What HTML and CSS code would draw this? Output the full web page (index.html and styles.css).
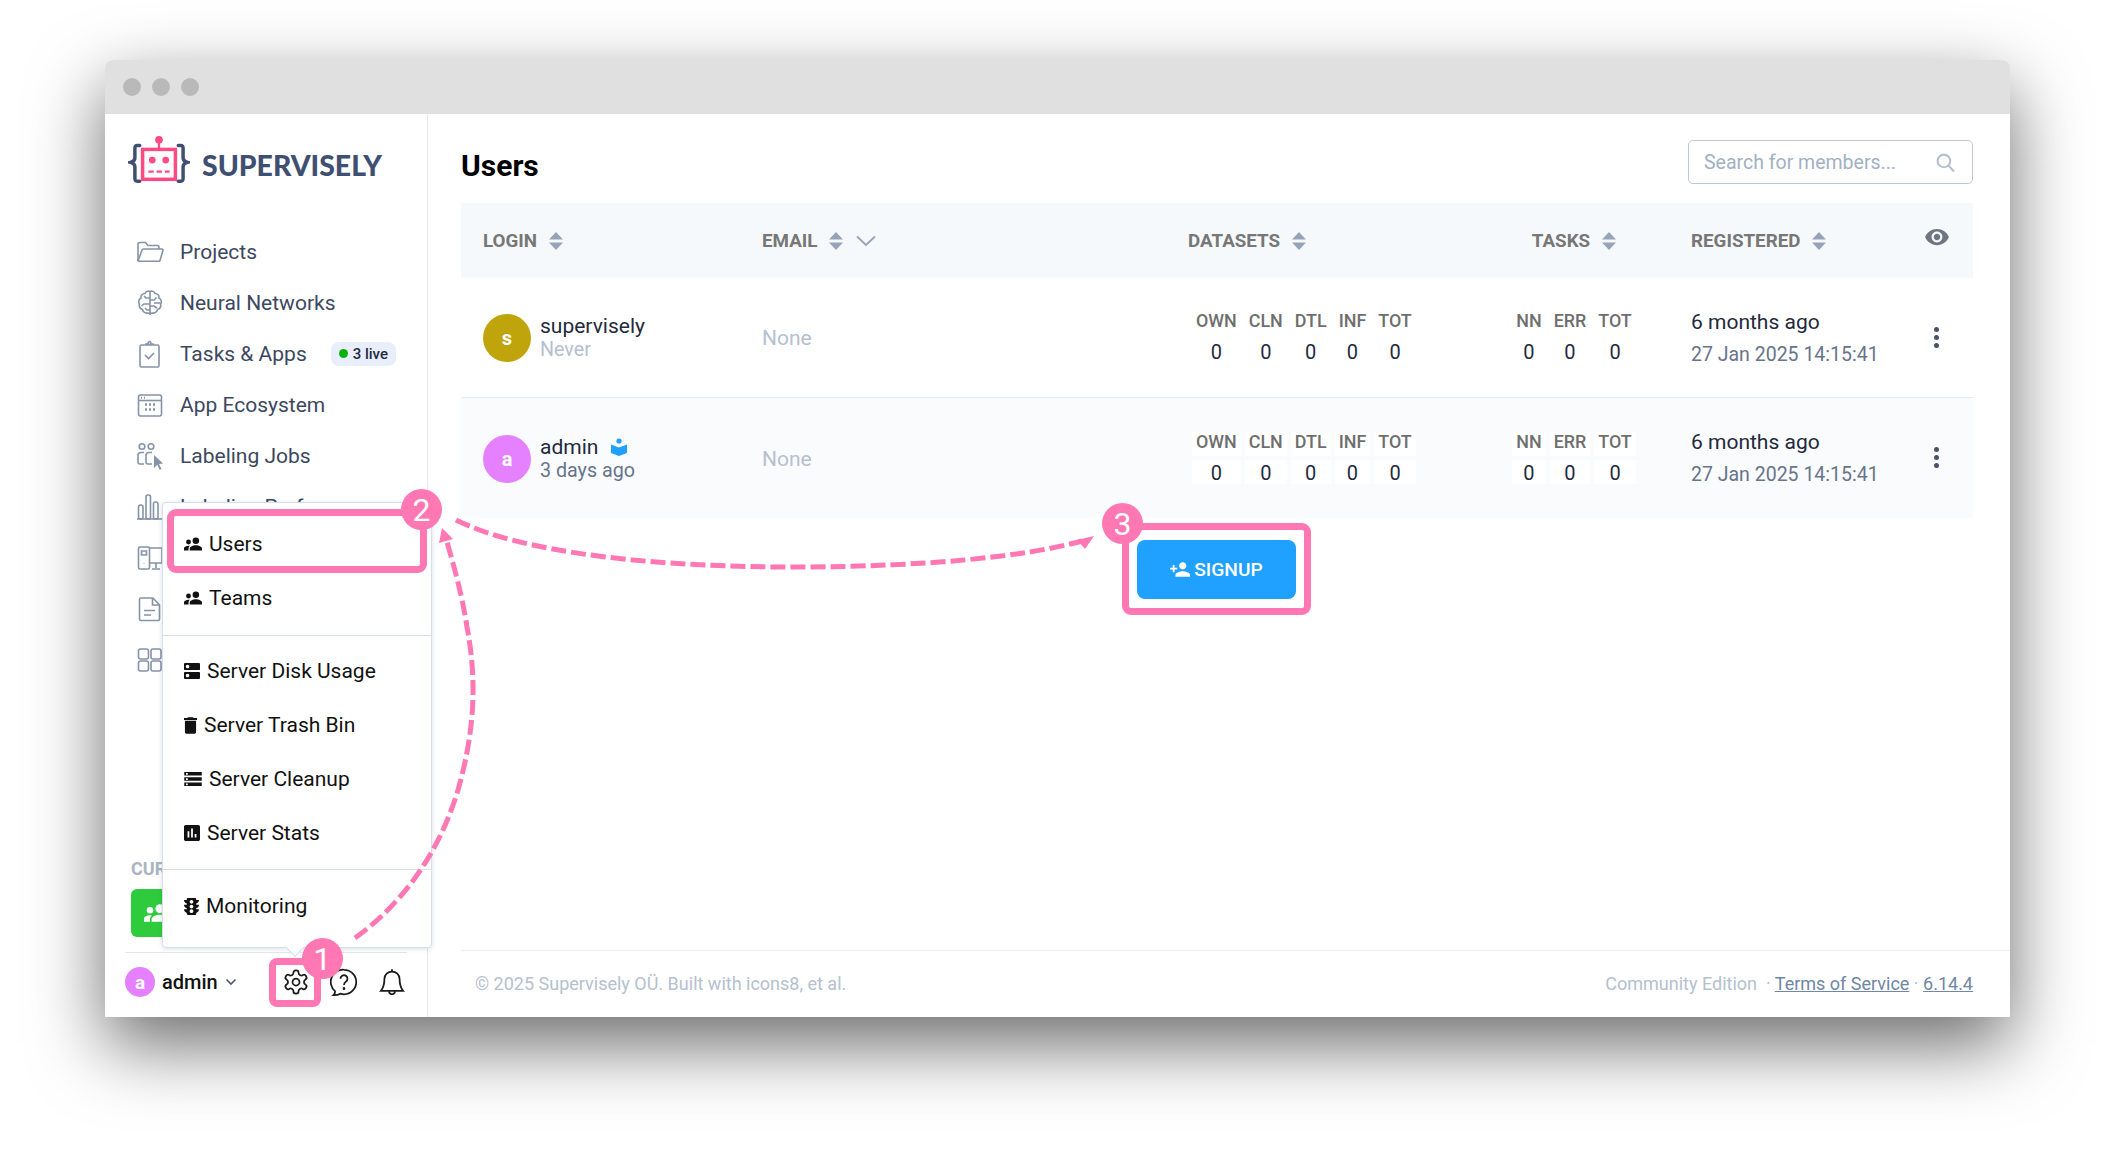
FILE: index.html
```html
<!DOCTYPE html>
<html>
<head>
  <title>Supervisely - Users</title>
  <link rel="stylesheet" href="styles.css">
</head>
<body>
  <svg class="sprite" xmlns="http://www.w3.org/2000/svg">
    <symbol id="sort" viewBox="0 0 14 18"><path d="M7 0l7 7.6H0zM7 18L0 10.4h14z"/></symbol>
    <symbol id="people" viewBox="1 4 22 16"><circle cx="15.5" cy="8" r="4"/><circle cx="6.5" cy="9.5" r="3"/><path d="M15.5 13.5c-3.5 0-7.5 1.7-7.5 4V20h15v-2.5c0-2.300-4-4-7.500-4zM6.500 14c-2.500 0-5.500 1.300-5.500 3.300V20h5.500v-2.500c0-1.200.6-2.300 1.700-3.300-.6-.1-1.200-.2-1.700-.2z"/></symbol>
  </svg>

  <div class="page">
    <div class="window">
      <div class="titlebar">
        <span class="dot"></span><span class="dot"></span><span class="dot"></span>
      </div>
      <div class="app">

        <aside class="sidebar">
          <div class="logo">
            <svg class="logo-mark" viewBox="0 0 64 56" width="62" height="54">
              <g fill="none" stroke="#3f4f72" stroke-width="3.600" stroke-linecap="round">
                <path d="M12 12H9.500C7.500 12 7 13 7 15v10c0 2-1 3.500-4.500 4.500C6 30.500 7 32 7 34v12c0 2 .5 3 2.500 3H12"/>
                <path d="M52 12h2.500c2 0 2.500 1 2.500 3v10c0 2 1 3.500 4.500 4.500C58 30.500 57 32 57 34v12c0 2-.5 3-2.500 3H52"/>
              </g>
              <circle cx="32" cy="6" r="4" fill="#fb4b82"/>
              <path d="M32 8v7" stroke="#fb4b82" stroke-width="2.400"/>
              <rect x="15" y="16" width="34" height="31" fill="none" stroke="#fb4b82" stroke-width="3.600"/>
              <circle cx="25" cy="27" r="3.500" fill="#fb4b82"/>
              <circle cx="39" cy="27" r="3.500" fill="#fb4b82"/>
              <path d="M21 39h22" stroke="#fb4b82" stroke-width="2.400" stroke-dasharray="5.500 3"/>
            </svg>
            <span class="logo-text">SUPERVISELY</span>
          </div>

          <nav class="nav">
            <a class="nav-item">
              <svg class="nav-icon" viewBox="0 0 28 28"><path d="M2 23V6a1.500 1.500 0 0 1 1.500-1.500h6l2.500 3h9.500A1.500 1.500 0 0 1 23 9v2"/><path d="M2 23l4-11a1.500 1.500 0 0 1 1.400-1H26a1 1 0 0 1 1 1.300L24 22.500a1 1 0 0 1-1 .7H3a1 1 0 0 1-1-.2z"/></svg>
              <span>Projects</span>
            </a>
            <a class="nav-item">
              <svg class="nav-icon" viewBox="0 0 28 28"><path d="M14 2.500c-2-1-4.500 0-5 2-2.500 0-4.500 2-4 4.500-2.500 1.500-3 4-1.500 6-1 2.500.5 5 3 5.500.5 2.500 3 4 5.500 3.500l2 .5 2-.5c2.500.5 5-1 5.500-3.500 2.500-.5 4-3 3-5.500 1.500-2 1-4.500-1.500-6 .5-2.500-1.500-4.500-4-4.500-.5-2-3-3-5-2z"/><path d="M14 3v23M14 9h-4l-2-2M14 15H8l-2.500 2M14 21h-3l-2-2M14 11h4l2.500-2.500M14 17h4l3 2M18 14h6"/></svg>
              <span>Neural Networks</span>
            </a>
            <a class="nav-item">
              <svg class="nav-icon" viewBox="0 0 28 28"><rect x="4" y="5" width="19" height="22" rx="1.500"/><path d="M10 5V4h2.500a1.500 1.500 0 0 1 1-2.500 1.500 1.500 0 0 1 1 2.500H17v1"/><path d="M9 15l3.500 3.500L18 13"/></svg>
              <span>Tasks &amp; Apps</span>
              <span class="live"><i class="live-dot"></i>3 live</span>
            </a>
            <a class="nav-item">
              <svg class="nav-icon" viewBox="0 0 28 28"><rect x="2.500" y="4" width="23" height="21" rx="2"/><path d="M2.500 9.500h23"/><path d="M5 6.800h1M8 6.800h1" stroke-width="2"/><path d="M9 13.500h2M13 13.500h2M17 13.500h2M9 18.500h2M13 18.500h2M17 18.500h2" stroke-width="2.400"/></svg>
              <span>App Ecosystem</span>
            </a>
            <a class="nav-item">
              <svg class="nav-icon" viewBox="0 0 28 28"><circle cx="6" cy="4.500" r="2.800"/><circle cx="15" cy="4.500" r="2.800"/><path d="M8 10.500H5a3 3 0 0 0-3 3V20a2 2 0 0 0 2 2h4M16 10.500h-3a3 3 0 0 0-3 3V20a2 2 0 0 0 2 2h4"/><path class="solid" d="M18 13l9 8.500-4 .4 2.500 5-1.800.9-2.400-5L18 26z"/></svg>
              <span>Labeling Jobs</span>
            </a>
            <a class="nav-item">
              <svg class="nav-icon" viewBox="0 0 28 28"><path d="M1 26h26"/><rect x="2.500" y="12" width="4.500" height="14" rx="2"/><rect x="10" y="2" width="4.500" height="24" rx="2"/><rect x="17.500" y="9" width="4.500" height="17" rx="2"/></svg>
              <span>Labeling Performance</span>
            </a>
            <a class="nav-item">
              <svg class="nav-icon" viewBox="0 0 28 28"><rect x="2.500" y="3" width="11" height="22" rx="1.500"/><path d="M5.500 7h5v4h-5z"/><path d="M13.500 4H26v15H13.500M20 19v5M16 25h8M8 19v.5" /></svg>
            </a>
            <a class="nav-item">
              <svg class="nav-icon" viewBox="0 0 28 28"><path d="M5 3h12l6.500 7v14a1.500 1.500 0 0 1-1.500 1.500H5A1.500 1.500 0 0 1 3.500 24V4.500A1.500 1.500 0 0 1 5 3z"/><path d="M16.500 3.500V10h7M8 15.500h11M8 20h7"/></svg>
            </a>
            <a class="nav-item">
              <svg class="nav-icon" viewBox="0 0 28 28"><rect x="2.500" y="3" width="10" height="10" rx="2"/><rect x="15" y="3" width="10" height="10" rx="2"/><rect x="2.500" y="15" width="10" height="10" rx="2"/><rect x="15" y="15" width="10" height="10" rx="2"/></svg>
            </a>
          </nav>

          <div class="team">
            <div class="team-label">CUR</div>
            <div class="team-button">
              <svg class="team-icon"><use href="#people"/></svg>
            </div>
          </div>

          <div class="account">
            <span class="avatar-small">a</span>
            <span class="account-name">admin</span>
            <svg class="account-chevron" viewBox="0 0 12 8"><path d="M1.500 1.500L6 6l4.500-4.500"/></svg>
            <div class="account-icons">
              <span class="icon-button">
                <svg class="tool-icon" viewBox="0 0 24 24"><path d="M12.220 2h-.44a2 2 0 0 0-2 2v.18a2 2 0 0 1-1 1.730l-.43.25a2 2 0 0 1-2 0l-.15-.08a2 2 0 0 0-2.730.73l-.22.38a2 2 0 0 0 .73 2.730l.15.1a2 2 0 0 1 1 1.720v.51a2 2 0 0 1-1 1.740l-.15.09a2 2 0 0 0-.73 2.730l.22.38a2 2 0 0 0 2.730.73l.15-.08a2 2 0 0 1 2 0l.43.25a2 2 0 0 1 1 1.730V20a2 2 0 0 0 2 2h.44a2 2 0 0 0 2-2v-.18a2 2 0 0 1 1-1.730l.43-.25a2 2 0 0 1 2 0l.15.08a2 2 0 0 0 2.730-.73l.22-.39a2 2 0 0 0-.73-2.730l-.15-.08a2 2 0 0 1-1-1.740v-.5a2 2 0 0 1 1-1.740l.15-.09a2 2 0 0 0 .73-2.730l-.22-.38a2 2 0 0 0-2.730-.73l-.15.08a2 2 0 0 1-2 0l-.43-.25a2 2 0 0 1-1-1.730V4a2 2 0 0 0-2-2z"/><circle cx="12" cy="12" r="3"/></svg>
                <span class="mark mark-gear"><b class="mark-badge mark-badge-gear">1</b></span>
              </span>
              <span class="icon-button">
                <svg class="tool-icon" viewBox="0 0 24 24"><path d="M12 1.500a10.500 10.500 0 0 1 0 21c-1.200 0-2.300-.2-3.300-.5-1.200.8-3.400 1.300-5.700 1.200 1-.8 1.400-2 1.400-3.200A10.500 10.500 0 0 1 12 1.500z"/><path d="M9 9.200a3 3 0 1 1 4.600 2.500c-1 .7-1.600 1.300-1.600 2.800"/><path d="M12 17.300v.4" stroke-linecap="round" stroke-width="2.200"/></svg>
              </span>
              <span class="icon-button">
                <svg class="tool-icon" viewBox="0 0 24 24"><path d="M5.500 9.500a6.500 6.500 0 0 1 13 0c0 6 1.300 8 3 10H2.500c1.700-2 3-4 3-10z"/><path d="M9.500 20a2.500 2.500 0 0 0 5 0"/><path d="M12 1v2"/></svg>
              </span>
            </div>
          </div>

          <div class="popup">
            <a class="popup-item popup-users">
              <svg class="pop-icon pop-people"><use href="#people"/></svg><span>Users</span>
              <span class="mark mark-users"><b class="mark-badge mark-badge-users">2</b></span>
            </a>
            <a class="popup-item">
              <svg class="pop-icon pop-people"><use href="#people"/></svg><span>Teams</span>
            </a>
            <div class="popup-line"></div>
            <a class="popup-item">
              <svg class="pop-icon pop-disk" viewBox="3 3 18 18"><path d="M20 13H4c-.55 0-1 .45-1 1v6c0 .55.45 1 1 1h16c.55 0 1-.45 1-1v-6c0-.55-.45-1-1-1zM7 19c-1.100 0-2-.9-2-2s.9-2 2-2 2 .9 2 2-.9 2-2 2zM20 3H4c-.55 0-1 .45-1 1v6c0 .55.45 1 1 1h16c.55 0 1-.45 1-1V4c0-.55-.45-1-1-1zM7 9c-1.100 0-2-.9-2-2s.9-2 2-2 2 .9 2 2-.9 2-2 2z"/></svg><span>Server Disk Usage</span>
            </a>
            <a class="popup-item">
              <svg class="pop-icon pop-trash" viewBox="5 3 14 18"><path d="M6 19c0 1.100.9 2 2 2h8c1.100 0 2-.9 2-2V7H6v12zM19 4h-3.500l-1-1h-5l-1 1H5v2h14V4z"/></svg><span>Server Trash Bin</span>
            </a>
            <a class="popup-item">
              <svg class="pop-icon pop-people" viewBox="2 4 20 16"><path d="M2 20h20v-4H2v4zm2-3h2v2H4v-2zM2 4v4h20V4H2zm4 3H4V5h2v2zm-4 7h20v-4H2v4zm2-3h2v2H4v-2z"/></svg><span>Server Cleanup</span>
            </a>
            <a class="popup-item">
              <svg class="pop-icon pop-disk" viewBox="3 3 18 18"><path d="M19 3H5c-1.100 0-2 .9-2 2v14c0 1.100.9 2 2 2h14c1.100 0 2-.9 2-2V5c0-1.100-.9-2-2-2zM9 17H7v-7h2v7zm4 0h-2V7h2v10zm4 0h-2v-4h2v4z"/></svg><span>Server Stats</span>
            </a>
            <div class="popup-line popup-line-low"></div>
            <a class="popup-item">
              <svg class="pop-icon pop-traffic" viewBox="4 3 16 18"><path d="M20 10h-3V8.860c1.720-.45 3-2 3-3.860h-3V4c0-.55-.45-1-1-1H8c-.55 0-1 .45-1 1v1H4c0 1.860 1.280 3.410 3 3.860V10H4c0 1.860 1.280 3.410 3 3.860V15H4c0 1.860 1.280 3.410 3 3.860V20c0 .55.45 1 1 1h8c.55 0 1-.45 1-1v-1.140c1.720-.45 3-2 3-3.860h-3v-1.140c1.720-.45 3-2 3-3.860zm-8 9c-1.110 0-2-.9-2-2s.89-2 2-2c1.100 0 2 .9 2 2s-.89 2-2 2zm0-5c-1.110 0-2-.9-2-2s.89-2 2-2c1.100 0 2 .9 2 2s-.89 2-2 2zm0-5c-1.110 0-2-.89-2-2 0-1.110.89-2 2-2 1.100 0 2 .89 2 2 0 1.110-.89 2-2 2z"/></svg><span>Monitoring</span>
            </a>
            <i class="popup-arrow"></i>
          </div>
        </aside>

        <main class="main">
          <div class="content">
            <div class="page-head">
              <h1>Users</h1>
              <div class="search">
                <span>Search for members...</span>
                <svg class="search-icon" viewBox="0 0 20 20"><circle cx="8.500" cy="8.500" r="6"/><path d="M13 13l5 5.500"/></svg>
              </div>
            </div>

            <table class="users">
              <colgroup>
                <col class="col-login"><col class="col-email"><col class="col-datasets"><col class="col-tasks"><col class="col-reg"><col class="col-more">
              </colgroup>
              <thead>
                <tr>
                  <th><span class="th-in">LOGIN <svg class="sort"><use href="#sort"/></svg></span></th>
                  <th><span class="th-in">EMAIL <svg class="sort"><use href="#sort"/></svg>
                    <svg class="email-chevron" viewBox="0 0 20 12"><path d="M1 1.500l9 8.500 9-8.500"/></svg></span></th>
                  <th><span class="th-in">DATASETS <svg class="sort"><use href="#sort"/></svg></span></th>
                  <th class="center"><span class="th-in">TASKS <svg class="sort"><use href="#sort"/></svg></span></th>
                  <th><span class="th-in">REGISTERED <svg class="sort"><use href="#sort"/></svg></span></th>
                  <th class="more-cell"><svg class="eye" viewBox="0 0 24 24"><path d="M12 4.500C7 4.500 2.730 7.610 1 12c1.730 4.390 6 7.500 11 7.500s9.270-3.110 11-7.500c-1.730-4.390-6-7.500-11-7.500zM12 17c-2.760 0-5-2.240-5-5s2.240-5 5-5 5 2.240 5 5-2.240 5-5 5zm0-8c-1.660 0-3 1.340-3 3s1.340 3 3 3 3-1.340 3-3-1.340-3-3-3z"/></svg></th>
                </tr>
              </thead>
              <tbody>
                <tr>
                  <td>
                    <div class="user">
                      <span class="avatar avatar-s">s</span>
                      <div>
                        <div class="user-name">supervisely</div>
                        <div class="user-seen user-never">Never</div>
                      </div>
                    </div>
                  </td>
                  <td class="none">None</td>
                  <td>
                    <table class="mini">
                      <tr><th>OWN</th><th>CLN</th><th>DTL</th><th>INF</th><th>TOT</th></tr>
                      <tr><td>0</td><td>0</td><td>0</td><td>0</td><td>0</td></tr>
                    </table>
                  </td>
                  <td class="center">
                    <table class="mini">
                      <tr><th>NN</th><th>ERR</th><th>TOT</th></tr>
                      <tr><td>0</td><td>0</td><td>0</td></tr>
                    </table>
                  </td>
                  <td>
                    <div class="reg-ago">6 months ago</div>
                    <div class="reg-date">27 Jan 2025 14:15:41</div>
                  </td>
                  <td class="more-cell"><span class="kebab"><i></i><i></i><i></i></span></td>
                </tr>
                <tr class="row-alt">
                  <td>
                    <div class="user">
                      <span class="avatar avatar-a">a</span>
                      <div>
                        <div class="user-name">admin
                          <svg class="book" viewBox="0 0 16 18"><circle cx="8" cy="3" r="2.600"/><path d="M0 6.500l8 3 8-3V15l-8 3-8-3z"/></svg>
                        </div>
                        <div class="user-seen">3 days ago</div>
                      </div>
                    </div>
                  </td>
                  <td class="none">None</td>
                  <td>
                    <table class="mini">
                      <tr><th>OWN</th><th>CLN</th><th>DTL</th><th>INF</th><th>TOT</th></tr>
                      <tr><td>0</td><td>0</td><td>0</td><td>0</td><td>0</td></tr>
                    </table>
                  </td>
                  <td class="center">
                    <table class="mini">
                      <tr><th>NN</th><th>ERR</th><th>TOT</th></tr>
                      <tr><td>0</td><td>0</td><td>0</td></tr>
                    </table>
                  </td>
                  <td>
                    <div class="reg-ago">6 months ago</div>
                    <div class="reg-date">27 Jan 2025 14:15:41</div>
                  </td>
                  <td class="more-cell"><span class="kebab"><i></i><i></i><i></i></span></td>
                </tr>
              </tbody>
            </table>

            <div class="signup-row">
              <button class="signup">
                <svg class="signup-icon" viewBox="1 4 22 16"><path d="M15 12c2.210 0 4-1.790 4-4s-1.790-4-4-4-4 1.790-4 4 1.790 4 4 4zm-9-2V7H4v3H1v2h3v3h2v-3h3v-2H6zm9 4c-2.670 0-8 1.340-8 4v2h16v-2c0-2.660-5.330-4-8-4z"/></svg>
                SIGNUP
                <span class="mark mark-signup"><b class="mark-badge mark-badge-signup">3</b></span>
              </button>
            </div>
          </div>

          <footer class="footer">
            <span>© 2025 Supervisely OÜ. Built with icons8, et al.</span>
            <span>Community Edition &nbsp;· <a>Terms of Service</a> · <a>6.14.4</a></span>
          </footer>
        </main>

      </div>
    </div>

    <svg class="arrows" viewBox="0 0 2115 1167" width="2115" height="1167">
      <path class="arrow-line" d="M355 938C405 902 440 850 458 790C475 730 477 680 467 627C462 595 455 570 447 542"/>
      <path class="arrow-head" d="M442 528L439 543L453 539z"/>
      <path class="arrow-line" d="M456 520C520 552 650 568 809 567C920 566 1020 558 1082 541"/>
      <path class="arrow-head" d="M1094 536L1077 540L1085 549z"/>
    </svg>
  </div>
</body>
</html>
```

FILE: styles.css
```css
* {
  box-sizing: border-box;
}

html, body {
  margin: 0;
  background: #fff;
  overflow: hidden;
}

body {
  font-family: Roboto, "Noto Sans", sans-serif;
  font-size: 20px;
  color: #1f2a3c;
}

a {
  color: inherit;
}

.sprite {
  position: absolute;
  width: 0;
  height: 0;
}

.page {
  position: relative;
  width: 2115px;
  height: 1167px;
  padding: 60px 105px 150px;
}

.window {
  display: flex;
  flex-direction: column;
  height: 957px;
  background: #fff;
  border-radius: 8px 8px 0 0;
  box-shadow: 0 28px 72px rgba(0, 0, 0, 0.58);
}

.titlebar {
  display: flex;
  align-items: center;
  gap: 11px;
  flex: 0 0 54px;
  padding-left: 18px;
  background: #e0e0e0;
  border-radius: 8px 8px 0 0;
}

.dot {
  width: 18px;
  height: 18px;
  border-radius: 50%;
  background: #b9b9b9;
}

.app {
  display: flex;
  flex: 1;
  min-height: 0;
}

/* sidebar */

.sidebar {
  position: relative;
  display: flex;
  flex-direction: column;
  flex: 0 0 323px;
  border-right: 1px solid #e6e8ec;
  background: #fff;
}

.logo {
  display: flex;
  align-items: center;
  gap: 12px;
  height: 56px;
  margin: 19px 0 0 23px;
}

.logo-mark {
  flex: none;
}

.logo-text {
  margin-top: 8px;
  font-family: Lato, sans-serif;
  font-size: 28.400px;
  font-weight: 900;
  color: #3f4f72;
}

.nav {
  display: flex;
  flex-direction: column;
  margin-top: 37px;
}

.nav-item {
  display: flex;
  align-items: center;
  height: 51px;
  padding-left: 31px;
  font-size: 21px;
  color: #3c4860;
  white-space: nowrap;
}

.nav-icon {
  flex: none;
  width: 28px;
  height: 28px;
  margin-right: 16px;
  fill: none;
  stroke: #8593a8;
  stroke-width: 1.600;
}

.nav-icon .solid {
  fill: #8593a8;
  stroke: none;
}

.live {
  display: flex;
  align-items: center;
  height: 24px;
  margin-left: 24px;
  padding: 0 8px;
  border-radius: 8px;
  background: #e8eefc;
  font-size: 15px;
  font-weight: 500;
  color: #1f2a3c;
}

.live-dot {
  width: 9px;
  height: 9px;
  margin-right: 5px;
  border-radius: 50%;
  background: #0db10d;
}

.team {
  margin: auto 20px 0 26px;
}

.team-label {
  font-size: 18px;
  font-weight: 700;
  color: #aab3c2;
}

.team-button {
  display: flex;
  align-items: center;
  height: 48px;
  margin-top: 10px;
  padding-left: 13px;
  border-radius: 6px;
  background: #2ecc3d;
}

.team-icon {
  width: 24px;
  height: 18px;
  fill: #fff;
}

.account {
  display: flex;
  align-items: center;
  height: 65px;
  margin: 15px 20px 0 20px;
  padding-bottom: 6px;
  border-top: 1px solid #e3e7ec;
}

.avatar-small {
  display: flex;
  align-items: center;
  justify-content: center;
  width: 30px;
  height: 30px;
  border-radius: 50%;
  background: #e580ff;
  font-size: 19px;
  font-weight: 700;
  color: #fff;
}

.account-name {
  margin-left: 7px;
  font-weight: 500;
  color: #111;
}

.account-chevron {
  width: 12px;
  height: 8px;
  margin-left: 7px;
  fill: none;
  stroke: #4a5670;
  stroke-width: 1.600;
}

.account-icons {
  display: flex;
  gap: 20px;
  margin-left: 45px;
}

.icon-button {
  position: relative;
  display: flex;
  width: 28px;
  height: 28px;
}

.tool-icon {
  width: 28px;
  height: 28px;
  fill: none;
  stroke: #1a1a1a;
  stroke-width: 1.500;
}

/* gear menu */

.popup {
  position: absolute;
  left: 57px;
  bottom: 69px;
  z-index: 5;
  width: 270px;
  padding: 14px 0 14px;
  border: 1px solid #d5dfe9;
  border-radius: 4px;
  background: #fff;
  box-shadow: 0 1px 5px rgba(60, 80, 110, 0.18);
}

.popup-item {
  position: relative;
  display: flex;
  align-items: center;
  gap: 7px;
  height: 54px;
  padding-left: 21px;
  font-size: 21px;
  color: #111;
}

.popup-line {
  height: 1px;
  margin: 10px 0 8px;
  background: #d5dfe9;
}

.popup-line-low {
  margin: 9px 0 9px;
}

.pop-icon {
  flex: none;
  height: 16px;
  fill: #111;
}

.pop-people {
  width: 18px;
  height: 14px;
}

.pop-disk {
  width: 16px;
}

.pop-trash {
  width: 13px;
  height: 17px;
}

.pop-traffic {
  width: 15px;
  height: 17px;
}

.popup-arrow {
  position: absolute;
  left: 125px;
  bottom: -7px;
  width: 14px;
  height: 14px;
  border-right: 1px solid #d5dfe9;
  border-bottom: 1px solid #d5dfe9;
  background: #fff;
  transform: rotate(45deg);
}

/* pink highlights */

.mark {
  position: absolute;
  z-index: 7;
  border: 7px solid #ff78b4;
  border-radius: 9px;
  pointer-events: none;
}

.mark-badge {
  position: absolute;
  display: flex;
  align-items: center;
  justify-content: center;
  width: 41px;
  height: 41px;
  border-radius: 50%;
  background: #ff78b4;
  font-size: 32px;
  font-weight: 400;
  color: #fff;
}

.mark-gear {
  top: -10px;
  left: -13px;
  width: 52px;
  height: 49px;
  border-radius: 8px;
}

.mark-badge-gear {
  top: -27px;
  left: 26px;
}

.mark-users {
  top: -8px;
  left: 4px;
  width: 260px;
  height: 64px;
}

.mark-badge-users {
  top: -27px;
  right: -22px;
}

.mark-signup {
  top: -17px;
  left: -15px;
  right: -15px;
  bottom: -16px;
}

.mark-badge-signup {
  top: -27px;
  left: -27px;
}

.arrows {
  position: absolute;
  top: 0;
  left: 0;
  z-index: 6;
  pointer-events: none;
}

.arrow-line {
  fill: none;
  stroke: #ff78b4;
  stroke-width: 5;
  stroke-dasharray: 15 5;
}

.arrow-head {
  fill: #ff78b4;
}

/* main */

.main {
  display: flex;
  flex-direction: column;
  flex: 1;
  min-width: 0;
}

.content {
  flex: 1;
  padding: 26px 37px 0 33px;
}

.page-head {
  display: flex;
  align-items: center;
  justify-content: space-between;
  height: 44px;
  margin-bottom: 19px;
}

h1 {
  margin: 6px 0 0;
  font-size: 30px;
  font-weight: 700;
  color: #000;
}

.search {
  display: flex;
  align-items: center;
  justify-content: space-between;
  width: 285px;
  height: 44px;
  padding: 0 16px 0 15px;
  border: 1px solid #bccadb;
  border-radius: 5px;
  font-size: 19.500px;
  color: #a3b0c4;
}

.search-icon {
  width: 21px;
  height: 21px;
  fill: none;
  stroke: #b5c0d0;
  stroke-width: 2;
}

/* users table */

.users {
  width: 1512px;
  table-layout: fixed;
  border-collapse: collapse;
}

.col-login { width: 279px; }
.col-email { width: 426px; }
.col-datasets { width: 313px; }
.col-tasks { width: 190px; }
.col-reg { width: 236px; }
.col-more { width: 68px; }

.users > thead > tr {
  height: 75px;
  background: #f6f9fc;
}

.users > thead th {
  padding: 0 0 0 22px;
  text-align: left;
  font-size: 18.800px;
  font-weight: 700;
  color: #777;
}

.users > tbody > tr {
  height: 121px;
}

.users > tbody > tr:first-child {
  height: 119px;
  border-bottom: 1px solid #e8ecf1;
}

.users > tbody > tr > td {
  padding: 2px 0 0 22px;
  vertical-align: middle;
}

.row-alt {
  background: #fafbfd;
}

.users > thead th.center,
.users > tbody td.center {
  padding-left: 0;
  text-align: center;
}

.users > thead th.more-cell {
  padding: 0 4px 0 0;
  text-align: center;
}

.users > tbody td.more-cell {
  padding: 0 6px 0 0;
  text-align: center;
}

.th-in {
  display: inline-flex;
  align-items: center;
}

.sort {
  width: 14px;
  height: 18px;
  margin-left: 12px;
  fill: #97a3b8;
}

.email-chevron {
  width: 20px;
  height: 12px;
  margin-left: 13px;
  fill: none;
  stroke: #97a3b8;
  stroke-width: 1.800;
}

.eye {
  display: block;
  width: 26px;
  height: 26px;
  margin: -8px auto 0;
  fill: #6e7682;
}

.user {
  display: flex;
  align-items: center;
  gap: 9px;
}

.avatar {
  display: flex;
  align-items: center;
  justify-content: center;
  flex: none;
  width: 48px;
  height: 48px;
  border-radius: 50%;
  font-size: 20px;
  font-weight: 700;
  color: #fff;
}

.avatar-s {
  background: #bfa40b;
}

.avatar-a {
  background: #e580ff;
}

.user-name {
  display: flex;
  align-items: center;
  gap: 13px;
  font-size: 21px;
  line-height: 24px;
  color: #1f2a3c;
}

.book {
  width: 16px;
  height: 18px;
  fill: #20a0ff;
}

.user-seen {
  font-size: 19.700px;
  line-height: 24px;
  color: #67748a;
}

.user-never,
.none {
  color: #b5c0d0;
}

.none {
  font-size: 21px;
}

.mini {
  margin-top: -2px;
  border-spacing: 4px;
  border-collapse: separate;
}

.users > tbody td.center .mini {
  margin: -2px auto 0;
}

.mini th,
.mini td {
  height: 24px;
  padding: 0 4px;
  background: #fff;
  text-align: center;
}

.mini th {
  padding-bottom: 4px;
  line-height: 20px;
  font-size: 17.900px;
  font-weight: 500;
  color: #6e6e6e;
}

.mini td {
  padding-top: 3px;
  line-height: 21px;
  font-size: 20px;
  color: #1f2a3c;
}

.reg-ago {
  margin-bottom: 9px;
  font-size: 21px;
  line-height: 24px;
  color: #1f2a3c;
}

.reg-date {
  font-size: 19.500px;
  line-height: 24px;
  color: #67748a;
}

.kebab {
  display: flex;
  flex-direction: column;
  align-items: center;
  gap: 3px;
}

.kebab i {
  width: 5px;
  height: 5px;
  border-radius: 50%;
  background: #47536b;
}

.signup-row {
  display: flex;
  justify-content: center;
  margin-top: 22px;
  padding-right: 1px;
}

.signup {
  position: relative;
  display: flex;
  align-items: center;
  justify-content: center;
  gap: 4px;
  width: 159px;
  height: 59px;
  border: 0;
  border-radius: 8px;
  background: #20a0ff;
  font-family: inherit;
  font-size: 19.200px;
  font-weight: 500;
  color: #fff;
}

.signup-icon {
  width: 20px;
  height: 15px;
  fill: #fff;
}

.footer {
  display: flex;
  align-items: center;
  justify-content: space-between;
  flex: 0 0 67px;
  margin-left: 33px;
  padding: 0 37px 2px 14px;
  border-top: 1px solid #edf0f3;
  font-size: 18px;
  color: #b5c0d0;
}

.footer a {
  color: #6f86a6;
  text-decoration: underline;
}
```
